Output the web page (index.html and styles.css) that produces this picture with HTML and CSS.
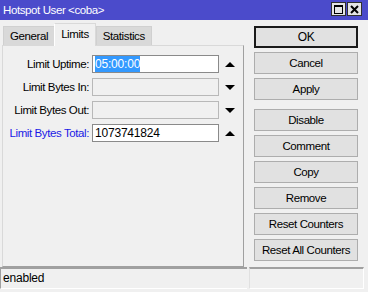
FILE: index.html
```html
<!DOCTYPE html>
<html lang="en">
<head>
  <meta charset="UTF-8" />
  <title>Hotspot User &lt;coba&gt;</title>
  <link rel="stylesheet" href="styles.css">
</head>
<body>

  <div class="window">
    <div class="titlebar">
      <span class="title">Hotspot User &lt;coba&gt;</span>
      <div class="title-btns">
        <span class="tbtn"><span class="max-icon"></span></span>
        <span class="tbtn">
          <svg width="9" height="9" viewBox="0 0 9 9"><path d="M1 1L8 8M8 1L1 8" stroke="#000" stroke-width="2"/></svg>
        </span>
      </div>
    </div>

    <div class="main">
      <div class="left">
        <div class="tabs">
          <span class="tab general">General</span>
          <span class="tab active">Limits</span>
          <span class="tab">Statistics</span>
        </div>
        <div class="panel">
          <div class="row">
            <label>Limit Uptime:</label>
            <div class="field"><span class="sel">05:00:00</span></div>
            <span class="arrow up"></span>
          </div>
          <div class="row">
            <label>Limit Bytes In:</label>
            <div class="field disabled"></div>
            <span class="arrow down"></span>
          </div>
          <div class="row">
            <label>Limit Bytes Out:</label>
            <div class="field disabled"></div>
            <span class="arrow down"></span>
          </div>
          <div class="row">
            <label class="blue">Limit Bytes Total:</label>
            <div class="field">1073741824</div>
            <span class="arrow up"></span>
          </div>
        </div>
      </div>

      <div class="buttons">
        <button class="btn default">OK</button>
        <button class="btn">Cancel</button>
        <button class="btn">Apply</button>
        <button class="btn spaced">Disable</button>
        <button class="btn">Comment</button>
        <button class="btn">Copy</button>
        <button class="btn">Remove</button>
        <button class="btn">Reset Counters</button>
        <button class="btn">Reset All Counters</button>
      </div>
    </div>

    <div class="status">
      <div class="cell">enabled</div>
      <div class="cell rest"></div>
    </div>
  </div>

</body>
</html>
```

FILE: styles.css
```css
body {
  margin: 0;
  font-family: 'Liberation Sans', Arial, sans-serif;
  font-size: 11.5px;
  letter-spacing: -0.4px;
  color: #000;
  background: #f0f0f0;
}

.window {
  width: 368px;
  height: 292px;
  display: flex;
  flex-direction: column;
  background: #f0f0f0;
}

/* title bar */
.titlebar {
  height: 20px;
  background: #4b4bcb;
  display: flex;
  align-items: center;
  justify-content: space-between;
  padding: 0 6px 0 3px;
}

.title {
  color: #fff;
  font-size: 11.5px;
}

.title-btns {
  display: flex;
  gap: 1px;
  margin-top: -2px;
}

.tbtn {
  width: 13px;
  height: 12px;
  border: 1px solid #303030;
  background: #e4e4e4;
  display: flex;
  align-items: center;
  justify-content: center;
}

.max-icon {
  width: 7px;
  height: 6px;
  border: 1px solid #000;
  border-top-width: 2px;
}

/* main area */
.main {
  flex: 1;
  display: flex;
}

.left {
  width: 242px;
  margin-left: 2px;
  display: flex;
  flex-direction: column;
}

.tabs {
  height: 25px;
  display: flex;
  align-items: flex-end;
}

.tab {
  height: 18px;
  line-height: 18px;
  padding: 0 6px;
  background: #d9d9d9;
  border: 1px solid #d0d0d0;
  border-bottom: none;
}

.tab.general {
  margin-left: 1px;
  border-right: none;
}

.tab.active {
  height: 22px;
  line-height: 20px;
  background: #f0f0f0;
  border-color: #d9d9d9;
  border-left-color: #fff;
  padding: 0 6px;
  margin-bottom: -1px;
  position: relative;
}

.panel {
  flex: 1;
  border: 1px solid #d9d9d9;
  border-right-color: #a0a0a0;
  border-bottom-color: #a0a0a0;
  padding-top: 9px;
  display: flex;
  flex-direction: column;
  gap: 5px;
}

.row {
  display: flex;
  align-items: center;
  height: 18px;
}

.row label {
  width: 86px;
  text-align: right;
  margin-right: 3px;
}

.row label.blue {
  color: #1a1ae6;
}

.field {
  width: 123px;
  height: 16px;
  line-height: 16px;
  padding-left: 2px;
  border: 1px solid #8a8a8a;
  background: #fff;
  font-size: 12px;
  letter-spacing: -0.2px;
}

.field.disabled {
  background: #f0f0f0;
  border-color: #b8b8b8;
}

.sel {
  background: #3399ff;
  color: #fff;
  padding: 1px 0;
}

.arrow {
  margin-left: 6px;
  width: 0;
  height: 0;
  border-left: 5px solid transparent;
  border-right: 5px solid transparent;
}

.arrow.up {
  border-bottom: 5px solid #000;
}

.arrow.down {
  border-top: 5px solid #000;
}

/* buttons column */
.buttons {
  width: 104px;
  margin-left: 10px;
  padding-top: 6px;
  display: flex;
  flex-direction: column;
  gap: 4px;
}

.btn {
  height: 22px;
  margin: 0;
  padding: 0;
  font-family: inherit;
  font-size: 11.5px;
  letter-spacing: -0.4px;
  background: #e1e1e1;
  border: 1px solid #adadad;
  color: #000;
}

.btn.default {
  border: 2px solid #1a1a1a;
  font-size: 12px;
}

.btn.spaced {
  margin-top: 5px;
}

/* status bar */
.status {
  height: 25px;
  display: flex;
}

.cell {
  height: 19px;
  line-height: 19px;
  padding-left: 2px;
  width: 244px;
  border-top: 2px solid #a0a0a0;
  border-left: 1px solid #a0a0a0;
  border-bottom: 1px solid #fff;
  font-size: 12px;
  letter-spacing: -0.2px;
}

.cell.rest {
  flex: 1;
  margin-left: 2px;
  margin-right: 4px;
  border-right: 1px solid #fff;
  border-left-color: #e0e0e0;
}
```
